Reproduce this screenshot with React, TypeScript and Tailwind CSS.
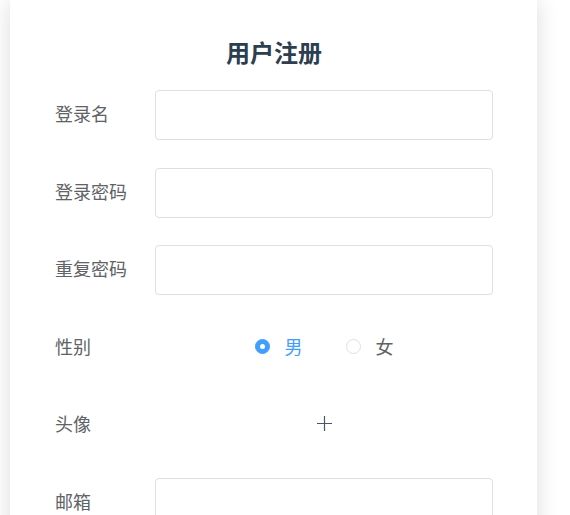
import { useState } from "react";

const font = { fontFamily: '"Noto Sans CJK SC", "Noto Sans", sans-serif' };

function Field({ label, type = "text" }: { label: string; type?: string }) {
  return (
    <div className="flex items-center h-[50px] mb-[27.5px]">
      <label className="w-[100px] shrink-0 pb-[3px] text-[18px] text-[#606266]">{label}</label>
      <input
        type={type}
        className="flex-1 h-[50px] rounded-[4px] border border-[#dcdfe6] bg-white px-[15px] text-[16px] text-[#606266] outline-none focus:border-[#409eff]"
      />
    </div>
  );
}

export default function App() {
  const [sex, setSex] = useState<"m" | "f">("m");

  return (
    <div className="min-h-screen bg-white overflow-hidden" style={font}>
      <div className="ml-[10px] w-[527px] bg-white shadow-[0_0_22px_rgba(0,0,0,0.14)] pl-[45px] pr-[44px] pb-10">
        <h2 className="pt-[36px] h-[90px] leading-[32px] text-center text-[24px] font-bold text-[#2c3e50]">用户注册</h2>

        <Field label="登录名" />
        <Field label="登录密码" type="password" />
        <Field label="重复密码" type="password" />

        <div className="flex items-center h-[50px] mb-[27.5px] pb-[2px]">
          <span className="w-[100px] shrink-0 text-[18px] text-[#606266]">性别</span>
          <div className="flex-1 flex justify-center items-center gap-[43px]">
            <button onClick={() => setSex("m")} className="flex items-center gap-[15px]">
              <span
                className={
                  sex === "m"
                    ? "w-[15px] h-[15px] rounded-full bg-[#409eff] border border-[#409eff] flex items-center justify-center"
                    : "w-[15px] h-[15px] rounded-full bg-white border border-[#dcdfe6] flex items-center justify-center"
                }
              >
                {sex === "m" && <span className="w-[5px] h-[5px] rounded-full bg-white" />}
              </span>
              <span className={sex === "m" ? "text-[18px] text-[#409eff]" : "text-[18px] text-[#606266]"}>男</span>
            </button>
            <button onClick={() => setSex("f")} className="flex items-center gap-[15px]">
              <span
                className={
                  sex === "f"
                    ? "w-[15px] h-[15px] rounded-full bg-[#409eff] border border-[#409eff] flex items-center justify-center"
                    : "w-[15px] h-[15px] rounded-full bg-white border border-[#dcdfe6] flex items-center justify-center"
                }
              >
                {sex === "f" && <span className="w-[5px] h-[5px] rounded-full bg-white" />}
              </span>
              <span className={sex === "f" ? "text-[18px] text-[#409eff]" : "text-[18px] text-[#606266]"}>女</span>
            </button>
          </div>
        </div>

        <div className="flex items-center h-[50px] mb-[27.5px] pb-[3px]">
          <span className="w-[100px] shrink-0 text-[18px] text-[#606266]">头像</span>
          <div className="flex-1 flex justify-center">
            <svg width="15" height="15" viewBox="0 0 15 15">
              <path d="M7.5 0v15M0 7.5h15" stroke="#4a5568" strokeWidth="1.2" />
            </svg>
          </div>
        </div>

        <Field label="邮箱" />
      </div>
    </div>
  );
}
